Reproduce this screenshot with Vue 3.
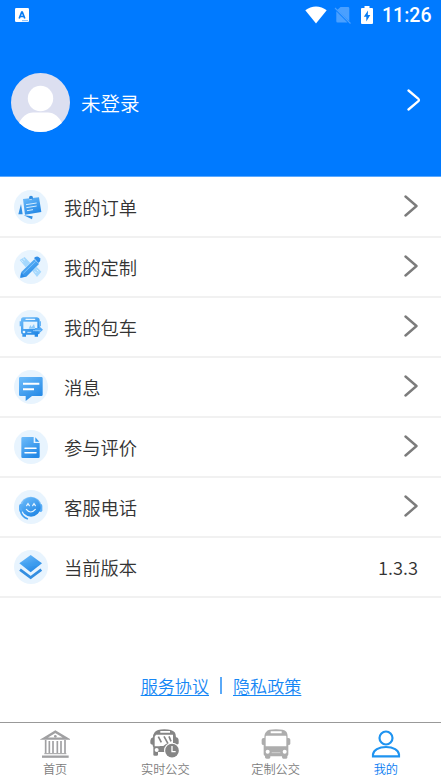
<script setup>
const rows = [
  { label: '我的订单', icon: 'order' },
  { label: '我的定制', icon: 'custom' },
  { label: '我的包车', icon: 'charter' },
  { label: '消息', icon: 'message' },
  { label: '参与评价', icon: 'review' },
  { label: '客服电话', icon: 'service' },
  { label: '当前版本', icon: 'version', value: '1.3.3' },
]
const tabs = [
  { label: '首页', icon: 'home' },
  { label: '实时公交', icon: 'live' },
  { label: '定制公交', icon: 'bus' },
  { label: '我的', icon: 'me', active: true },
]
</script>

<template>
  <div class="screen">
    <header class="hero">
      <div class="status">
        <svg class="ime" viewBox="0 0 14 14"><rect width="14" height="14" rx="1.2" fill="#fff" /><path d="M4.200 10.500 6.700 4h.6L9.800 10.500M5 8.500h4" fill="none" stroke="#087cf2" stroke-width="1.700" /><path d="M7 12.700h6" stroke="#79b8fc" stroke-width="1" /></svg>
        <div class="status-right">
          <svg class="wifi" viewBox="0 0 22 18"><path d="M.3 4.2C6.5-.9 15.500-.9 21.700 4.200L11 17.500Z" fill="#fff" /></svg>
          <svg class="sim" viewBox="0 0 18 18"><path d="M6.500 1H14q1.300 0 1.300 1.300v13L3.200 3.900ZM2.300 5.300 13.500 16.500H3.600q-1.300 0-1.300-1.300Z" fill="#4aa0ff" /><path d="m1 2 15.500 15.500" stroke="#4aa0ff" stroke-width="1.100" /></svg>
          <svg class="battery" viewBox="0 0 12 18"><path d="M3.500 0h5v2H11q1 0 1 1v14q0 1-1 1H1q-1 0-1-1V3q0-1 1-1h2.500Z" fill="#fff" /><path d="M7 4.500 2.800 10.800h2.500V15.500l4-6.400H6.800Z" fill="#087cf2" /></svg>
          <span class="clock">11:26</span>
        </div>
      </div>
      <div class="profile">
        <svg class="avatar" viewBox="0 0 59 59">
          <defs><clipPath id="face"><circle cx="29.500" cy="29.500" r="29.500" /></clipPath></defs>
          <g clip-path="url(#face)"><rect width="59" height="59" fill="#dcdff0" /><circle cx="29.500" cy="25.500" r="12.700" fill="#fff" /><path d="M8 59V50C11 44 16 39.500 22 39.500H37C43 39.500 48 44 51 50V59Z" fill="#fff" /></g>
        </svg>
        <span class="name">未登录</span>
        <svg class="go" viewBox="0 0 14 22"><path d="m1.500 1.500 9.600 8q1.700 1.500 0 3l-9.600 8" fill="none" stroke="#fff" stroke-width="2.300" stroke-linecap="round" /></svg>
      </div>
    </header>

    <main class="list">
      <div v-for="r in rows" :key="r.icon" class="row">
        <svg class="badge" viewBox="0 0 102 102">
          <defs>
            <linearGradient :id="'g-' + r.icon" x1="0" y1="0" x2="0.600" y2="1"><stop offset="0" stop-color="#6fbdfb" /><stop offset="1" stop-color="#2489e6" /></linearGradient>
          </defs>
          <circle cx="51" cy="51" r="51" fill="#e8f4fe" />
          <g v-if="r.icon === 'order'">
            <path d="m21 42-8 31h13ZM29 76l27 3-2 9Z" fill="#3391e5" />
            <path d="m27 27 48-5 7 44-49 8Z" :fill="`url(#g-${r.icon})`" />
            <circle cx="51" cy="23" r="6" fill="#318de0" /><path d="m46 29 8-1" stroke="#dff0ff" stroke-width="2" />
            <path d="m36 44 32-5M37 53l31-5M39 62l18-3" stroke="#d4edff" stroke-width="3" />
          </g>
          <g v-else-if="r.icon === 'custom'">
            <path d="m17 30 15-9 17 18-14 13ZM55 63l13-13 14 15-13 16Z" fill="#a5d8fd" />
            <path d="m22 31 6 5m-1-10 6 5m29 33 5 5m1-10 5 5" stroke="#d9f0ff" stroke-width="3" />
            <path d="m22 66 39-38 14 14-38 38-18 3Z" :fill="`url(#g-${r.icon})`" />
            <path d="m60 24 4-3q8-4 14 4 3 6-1 10l-4 4Z" fill="#318ee8" />
            <path d="m28 70 37-36" stroke="#7fc4fc" stroke-width="3" /><path d="m21 68 12 12-14 3Z" fill="#2989e5" />
          </g>
          <g v-else-if="r.icon === 'charter'">
            <path d="M28 22h40q8 0 9 8v38q0 5-5 5v7H62v-6H36v6H25v-7q-4-1-4-6V30q0-8 7-8" :fill="`url(#g-${r.icon})`" />
            <path d="M17 34h5v15h-5ZM76 34h5v15h-5Z" fill="#65b4f7" />
            <rect x="34" y="26" width="30" height="4" rx="2" fill="#eaf6ff" />
            <path d="M28 35h42v22H28Z" fill="#e5f4ff" /><path d="m44 56 5-11 4 7 7-10 4 14Z" fill="#8dcafa" />
            <circle cx="30" cy="66" r="4" fill="#e8f5ff" /><path d="M40 67h12" stroke="#c4e5ff" stroke-width="3" />
            <path d="M63 54h12l-1-7 13 12-13 12v-7H63Z" fill="#52a9f5" /><path d="M57 62h23" stroke="#b8dfff" stroke-width="2" />
          </g>
          <g v-else-if="r.icon === 'message'">
            <path d="M19 21h63q4 0 4 4v49q0 4-4 4H54L35 93V78H19q-4 0-4-4V25q0-4 4-4" :fill="`url(#g-${r.icon})`" />
            <path d="M27 41h49M27 58h33" stroke="#fff" stroke-width="6" />
          </g>
          <g v-else-if="r.icon === 'review'">
            <path d="M26 21h33v18h18v41q0 4-4 4H26q-4 0-4-4V25q0-4 4-4" :fill="`url(#g-${r.icon})`" />
            <path d="m64 22 12 13H64Z" fill="#369af0" /><path d="M33 55h33M33 68h33" stroke="#fff" stroke-width="4.500" stroke-linecap="round" />
          </g>
          <g v-else-if="r.icon === 'service'">
            <path d="M20 48a31 31 0 0 1 61 0" fill="none" stroke="#80c2f9" stroke-width="5" />
            <rect x="15" y="42" width="12" height="24" rx="6" fill="#58adf6" /><rect x="75" y="42" width="10" height="24" rx="5" fill="#58adf6" />
            <circle cx="51" cy="51" r="29" :fill="`url(#g-${r.icon})`" />
            <path d="m38 47 4-6 4 6m10 0 4-6 4 6M37 58q13 16 27 0" fill="none" stroke="#e7f5ff" stroke-width="3.500" stroke-linecap="round" />
            <path d="M20 64q3 16 20 22" fill="none" stroke="#3d9df0" stroke-width="5" stroke-linecap="round" />
          </g>
          <g v-else>
            <path d="m50 15 34 25-34 27-34-27Z" :fill="`url(#g-${r.icon})`" /><path d="M18 38h64l-11 10H29Z" fill="#3f9ff0" opacity=".4" />
            <path d="m18 59 32 24 32-24" fill="none" stroke="#338ee1" stroke-width="8" />
          </g>
        </svg>
        <span class="label">{{ r.label }}</span>
        <span v-if="r.value" class="value">{{ r.value }}</span>
        <svg v-else class="arrow" viewBox="0 0 14 22"><path d="m1.500 1.500 11 9.500-11 9.500" fill="none" stroke="#7c7c7c" stroke-width="2.400" stroke-linecap="round" stroke-linejoin="round" /></svg>
      </div>
    </main>

    <div class="legal"><a>服务协议</a><i class="bar"></i><a>隐私政策</a></div>

    <nav class="tabs">
      <div v-for="t in tabs" :key="t.icon" class="tab" :class="{ active: t.active }">
        <svg class="tab-icon" viewBox="0 0 90 90">
          <g v-if="t.icon === 'home'" fill="none" stroke="#a0a0a2">
            <path d="M11 29 46 8l35 21Z" stroke-width="7" /><circle cx="46" cy="22" r="4" fill="#a0a0a2" stroke="none" />
            <path d="M17 33v40M28 36v36M39 36v36M52 36v36M63 36v36M75 33v40" stroke-width="5" /><path d="M13 74h66" stroke-width="3" /><path d="M6 83h80" stroke-width="7" />
          </g>
          <g v-else-if="t.icon === 'live'">
            <path d="M14 10Q20 1 43 1t31 9q4 5 4 15 8 1 8 10v8q0 4-6 3v4q-15-6-25 2-11 8-10 17H24v8q0 3-4 3h-6q-4 0-4-3V54q-2-2-2-7-6 0-7-4v-8q0-7 8-10 0-9 5-15" fill="#858585" />
            <path d="M31 6h29v5H31ZM18 17h51v27H49L39 52H14V23Z" fill="#fff" />
            <path d="m25 23 9 17M42 22l12 22M57 22l6 15" stroke="#858585" stroke-width="5" />
            <circle cx="20" cy="63" r="6" fill="#fff" /><path d="M29 51h17v16H31Z" fill="#858585" />
            <circle cx="66" cy="65" r="24" fill="#fff" /><circle cx="66" cy="65" r="20.500" fill="#858585" /><path d="M66 51v17h11" fill="none" stroke="#fff" stroke-width="4" />
          </g>
          <g v-else-if="t.icon === 'bus'">
            <path d="M16 8Q21 1 45 1t31 7q4 4 4 19 8-1 8 5v12q0 4-6 4v28q0 4-3 5v5q0 3-5 3h-7q-4 0-4-5v-2H28v3q0 4-4 4h-7q-5 0-5-4v-4q-4-1-4-5V48q-6 0-6-4V32q0-6 8-5 0-15 6-19" fill="#adadad" />
            <path d="M29 7h33v6H29ZM17 20h57q2 0 2 3v29H14V23q0-3 3-3" fill="#fff" />
            <circle cx="20" cy="68" r="6" fill="#fff" /><circle cx="71" cy="68" r="6" fill="#fff" /><path d="M32 71h26" stroke="#d0d0d0" stroke-width="3" />
          </g>
          <g v-else fill="none" stroke="#1e93f0" stroke-width="6.500">
            <circle cx="45" cy="27" r="19.500" /><path d="M6 82V76C8 64 22 54 45 54S82 64 84 76v6Z" />
          </g>
        </svg>
        <span>{{ t.label }}</span>
      </div>
    </nav>
  </div>
</template>

<style>
body { margin: 0; background: #fff; }
</style>
<style scoped>
.screen { box-sizing: border-box; width: 441px; height: 784px; display: flex; flex-direction: column; overflow: hidden; background: #fff; font-family: "Noto Sans CJK SC", sans-serif; font-weight: 350; color: #333; }
svg { display: block; flex: none; }
.hero { box-sizing: border-box; height: 177px; flex: none; background: #007aff; border-bottom: 1px solid #5aa9ff; color: #fff; }
.status { height: 30px; display: flex; align-items: center; justify-content: space-between; padding: 0 10px 0 15px; }
.ime { width: 14px; height: 14px; }
.status-right { display: flex; align-items: center; }
.wifi { width: 22px; height: 18px; }
.sim { width: 18px; height: 18px; margin-left: 7px; }
.battery { width: 12px; height: 18px; margin-left: 9px; margin-bottom: 1px; }
.clock { margin-left: 9px; margin-top: 2px; width: 49px; font: 500 19.500px/28px Roboto, sans-serif; white-space: nowrap; }
.profile { display: flex; align-items: center; padding: 43px 20px 0 11px; }
.avatar { width: 59px; height: 59px; }
.name { margin-left: 11px; font-size: 19.500px; line-height: 30px; flex: 1; }
.go { width: 14px; height: 22px; margin-bottom: 5px; }
.list { flex: none; padding-top: 1px; }
.row { box-sizing: border-box; height: 60px; display: flex; align-items: center; padding: 0 23px 0 14px; border-bottom: 2px solid #f1f1f1; }
.badge { width: 34px; height: 34px; }
.label { margin-left: 16px; flex: 1; font-size: 18.300px; line-height: 28px; }
.arrow { width: 14px; height: 22px; margin-bottom: 2px; }
.value { font-size: 18.300px; line-height: 28px; }
.legal { display: flex; justify-content: center; align-items: center; margin-top: 75px; padding-left: 1px; height: 26px; font-size: 17.100px; line-height: 26px; color: #1687f5; }
.legal a { text-decoration: underline; text-decoration-thickness: 1px; text-underline-offset: 2px; }
.bar { width: 2px; height: 17px; margin: 0 11px 2px; background: #5aa9f7; }
.tabs { box-sizing: border-box; height: 62px; margin-top: auto; display: grid; grid-template-columns: repeat(4, 1fr); border-top: 1px solid #999; }
.tab { display: flex; flex-direction: column; align-items: center; padding-top: 6px; font-size: 12.200px; line-height: 18px; color: #7c7c7c; }
.tab-icon { width: 30px; height: 30px; }
.tab span { margin-top: 1px; }
.tab.active { color: #087cf2; }
</style>
